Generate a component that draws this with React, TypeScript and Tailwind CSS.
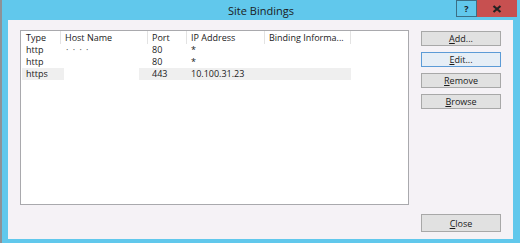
import React from "react";

// Columns measured from the listview header (px)
const COLUMNS = [
  { key: "type", label: "Type", width: 39 },
  { key: "host", label: "Host Name", width: 87 },
  { key: "port", label: "Port", width: 39 },
  { key: "ip", label: "IP Address", width: 78 },
  { key: "info", label: "Binding Informa...", width: 86 },
];

const ROWS = [
  { type: "http", host: "\u00b7 \u00b7   \u00b7  \u00b7", port: "80", ip: "*", info: "" },
  { type: "http", host: "", port: "80", ip: "*", info: "" },
  { type: "https", host: "", port: "443", ip: "10.100.31.23", info: "", selected: true },
];

function DlgButton({
  label,
  focused = false,
  tall = false,
}: {
  label: string;
  focused?: boolean;
  tall?: boolean;
}) {
  return (
    <button
      className={`w-[80px] ${tall ? "h-[18px]" : "h-[15px]"} border text-[9px] leading-none text-[#1a1a1a] ${
        focused ? "border-[#5c9bd6] bg-[#e6eef6]" : "border-[#a8a8a8] bg-[#e1e1e1]"
      }`}
    >
      <u>{label[0]}</u>
      {label.slice(1)}
    </button>
  );
}

export default function App() {
  return (
    <div
      className="flex h-[243px] w-[520px] flex-col overflow-hidden border-l-2 border-[#8e9297] bg-[#61c8ec] text-[#1a1a1a]"
      style={{ fontFamily: '"Open Sans", "Noto Sans", sans-serif' }}
    >
      {/* Title bar */}
      <div className="relative flex h-[20px] shrink-0 items-start">
        <div className="flex-1 pt-[4px] pl-[64px] text-center text-[11px] leading-[14px] text-[#1c1c1c]">
          Site Bindings
        </div>
        <div className="flex h-[17px] w-[21px] shrink-0 items-center justify-center border border-[#3b6f85] text-[9px] font-bold leading-none">
          ?
        </div>
        <div className="flex h-[17px] w-[40px] shrink-0 items-center justify-center bg-[#c75050]">
          <svg width="10" height="8" viewBox="0 0 10 8">
            <path d="M1.5 1 L8.5 7 M8.5 1 L1.5 7" stroke="#222" strokeWidth="2.2" />
          </svg>
        </div>
        <div className="w-[3px] shrink-0" />
      </div>

      {/* Client area */}
      <div className="mb-[4px] ml-[6px] mr-[7px] flex flex-1 flex-col bg-[#f5f2f6] px-[12px] pt-[10px]">
        <div className="flex gap-[12px]">
          {/* List view */}
          <div className="h-[175px] w-[389px] border border-[#a9a9ad] bg-white">
            <div className="flex h-[13px] items-center pl-[1px] text-[9px] leading-none">
              {COLUMNS.map((c) => (
                <div
                  key={c.key}
                  className="h-full border-r border-[#e3e3e3] pl-[4px] pt-[2px]"
                  style={{ width: c.width }}
                >
                  {c.label}
                </div>
              ))}
            </div>
            {ROWS.map((r, i) => (
              <div key={i} className="flex h-[12px] items-center pl-[1px] text-[9px] leading-none">
                <div className={`h-full w-[42px] pl-[4px] pt-[1px] ${r.selected ? "bg-[#efefef]" : ""}`}>
                  {r.type}
                </div>
                <div className="flex h-full w-[84px]">
                  <div className="w-[75px] pl-[2px] pt-[1px] tracking-[1px] text-[#444]">{r.host}</div>
                  <div className={`h-full flex-1 ${r.selected ? "bg-[#efefef]" : ""}`} />
                </div>
                <div className={`h-full w-[39px] pl-[4px] pt-[1px] ${r.selected ? "bg-[#efefef]" : ""}`}>
                  {r.port}
                </div>
                <div className={`h-full w-[78px] pl-[4px] pt-[1px] ${r.selected ? "bg-[#efefef]" : ""}`}>
                  {r.ip}
                </div>
                <div className={`h-full w-[86px] ${r.selected ? "bg-[#efefef]" : ""}`}>{r.info}</div>
              </div>
            ))}
          </div>

          {/* Button column */}
          <div className="flex flex-col gap-[6px] pt-[1px]">
            <DlgButton label="Add..." />
            <DlgButton label="Edit..." focused />
            <DlgButton label="Remove" />
            <DlgButton label="Browse" />
          </div>
        </div>

        <div className="mt-[9px] flex justify-end">
          <DlgButton label="Close" tall />
        </div>
      </div>
    </div>
  );
}
